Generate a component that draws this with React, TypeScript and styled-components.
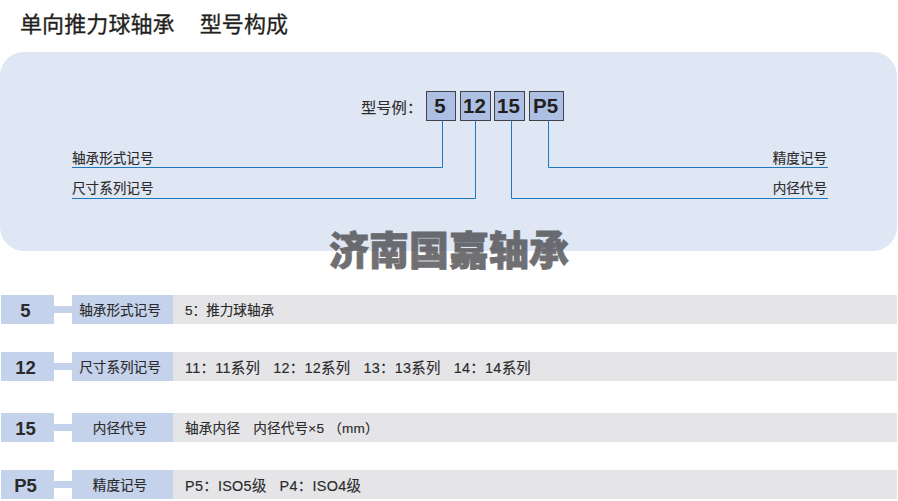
import React from "react";
import styled, { createGlobalStyle } from "styled-components";

const fontStack = `"Liberation Sans", "Noto Sans CJK SC", sans-serif`;

const GlobalStyle = createGlobalStyle`
  html, body {
    margin: 0;
    padding: 0;
    background: #ffffff;
  }
  body {
    width: 898px;
    height: 501px;
    overflow: hidden;
    font-family: ${fontStack};
    color: #2b2b2b;
  }
`;

const Page = styled("div")`
  position: relative;
  display: flex;
  flex-direction: column;
  width: 898px;
  height: 501px;
`;

const Title = styled("h1")`
  display: flex;
  gap: 25px;
  height: 52px;
  margin: 0;
  padding: 9px 0 0 20px;
  box-sizing: border-box;
  font-size: 22px;
  letter-spacing: 0.1px;
  line-height: 32px;
  font-weight: 400;
  -webkit-text-stroke: 0.3px #231f20;
  color: #231f20;
`;

const Panel = styled("section")`
  position: relative;
  box-sizing: border-box;
  width: 897px;
  height: 199px;
  padding-top: 39px;
  border-radius: 24px;
  background-color: #e0e7f4;
`;

const Leaders = styled("svg")`
  position: absolute;
  left: 0;
  top: 0;
`;

const CodeRow = styled("div")`
  display: flex;
  align-items: center;
  padding-left: 361px;
`;

const CodeLabel = styled("span")`
  width: 65px;
  font-size: 15.3px;
  -webkit-text-stroke: 0.15px #2b2b2b;
  color: #2b2b2b;
`;

const CodeBox = styled("div")<{ $width: number; $gap: number }>`
  box-sizing: border-box;
  width: ${(p) => p.$width}px;
  height: 30px;
  margin-right: ${(p) => p.$gap}px;
  padding-right: 2px;
  border: 1px solid #414146;
  background-color: #adc0e4;
  font-size: 20.5px;
  font-weight: 700;
  line-height: 28px;
  text-align: center;
  color: #231f20;
`;

const LeaderLabels = styled("div")<{ $top: number }>`
  display: flex;
  justify-content: space-between;
  margin-top: ${(p) => p.$top}px;
  padding: 0 70px 0 72px;
  font-size: 13.6px;
  line-height: 20px;
  -webkit-text-stroke: 0.15px #2b2b2b;
  color: #2b2b2b;
`;

const Rows = styled("div")`
  display: flex;
  flex-direction: column;
  margin-top: 44px;
  padding-left: 1px;
`;

const Row = styled("div")<{ $gap: number }>`
  display: flex;
  align-items: stretch;
  width: 896px;
  height: 29px;
  margin-top: ${(p) => p.$gap}px;
`;

const RowCode = styled("div")`
  box-sizing: border-box;
  width: 53px;
  padding-right: 4px;
  background-color: #c5d2ec;
  font-size: 18.5px;
  font-weight: 700;
  line-height: 32px;
  text-align: center;
  color: #2b2b2b;
`;

const RowLink = styled("div")`
  align-self: center;
  width: 18px;
  height: 7px;
  background-color: #c5d2ec;
`;

const RowName = styled("div")`
  box-sizing: border-box;
  width: 101px;
  padding-right: 5px;
  background-color: #c5d2ec;
  font-size: 13.6px;
  line-height: 32px;
  text-align: center;
  -webkit-text-stroke: 0.15px #2b2b2b;
  color: #2b2b2b;
`;

const RowDetail = styled("div")<{ $size: number; $spacing: number }>`
  flex: 1;
  display: flex;
  gap: 13px;
  padding-left: 12px;
  background-color: #e5e5e8;
  font-size: ${(p) => p.$size}px;
  letter-spacing: ${(p) => p.$spacing}px;
  line-height: 32px;
  white-space: pre;
  -webkit-text-stroke: 0.15px #2b2b2b;
  color: #2b2b2b;
`;

const Watermark = styled("div")`
  position: absolute;
  left: 329px;
  top: 225px;
  font-size: 40px;
  line-height: 52px;
  font-weight: 900;
  white-space: nowrap;
  -webkit-text-stroke: 0.8px #48484c;
  color: #48484c;
  opacity: 0.78;
`;

const rows = [
  { code: "5", name: "轴承形式记号", gap: 0, size: 13.6, spacing: 0, detail: ["5：推力球轴承"] },
  {
    code: "12",
    name: "尺寸系列记号",
    gap: 28,
    size: 14.4,
    spacing: 0.3,
    detail: ["11：11系列", "12：12系列", "13：13系列", "14：14系列"],
  },
  { code: "15", name: "内径代号", gap: 32, size: 13.6, spacing: 0.2, detail: ["轴承内径", "内径代号×5 （mm）"] },
  { code: "P5", name: "精度记号", gap: 28, size: 14.4, spacing: 0.3, detail: ["P5：ISO5级", "P4：ISO4级"] },
];

const boxes = [
  { text: "5", width: 30, gap: 4 },
  { text: "12", width: 31, gap: 3 },
  { text: "15", width: 31, gap: 4 },
  { text: "P5", width: 35, gap: 0 },
];

export default function App() {
  return (
    <Page>
      <GlobalStyle />
      <Title>
        <span>单向推力球轴承</span>
        <span>型号构成</span>
      </Title>
      <Panel>
        <Leaders width="897" height="199" fill="none" stroke="#1f78bd" strokeWidth="1">
          <path d="M442.5 68.5V115.5H72" />
          <path d="M475.5 68.5V146.5H72" />
          <path d="M511.5 68.5V146.5H828" />
          <path d="M548.5 68.5V115.5H828" />
        </Leaders>
        <CodeRow>
          <CodeLabel>型号例：</CodeLabel>
          {boxes.map((box) => (
            <CodeBox key={box.text} $width={box.width} $gap={box.gap}>
              {box.text}
            </CodeBox>
          ))}
        </CodeRow>
        <LeaderLabels $top={28}>
          <span>轴承形式记号</span>
          <span>精度记号</span>
        </LeaderLabels>
        <LeaderLabels $top={10}>
          <span>尺寸系列记号</span>
          <span>内径代号</span>
        </LeaderLabels>
      </Panel>
      <Rows>
        {rows.map((row) => (
          <Row key={row.code} $gap={row.gap}>
            <RowCode>{row.code}</RowCode>
            <RowLink />
            <RowName>{row.name}</RowName>
            <RowDetail $size={row.size} $spacing={row.spacing}>
              {row.detail.map((item) => (
                <span key={item}>{item}</span>
              ))}
            </RowDetail>
          </Row>
        ))}
      </Rows>
      <Watermark>济南国嘉轴承</Watermark>
    </Page>
  );
}
